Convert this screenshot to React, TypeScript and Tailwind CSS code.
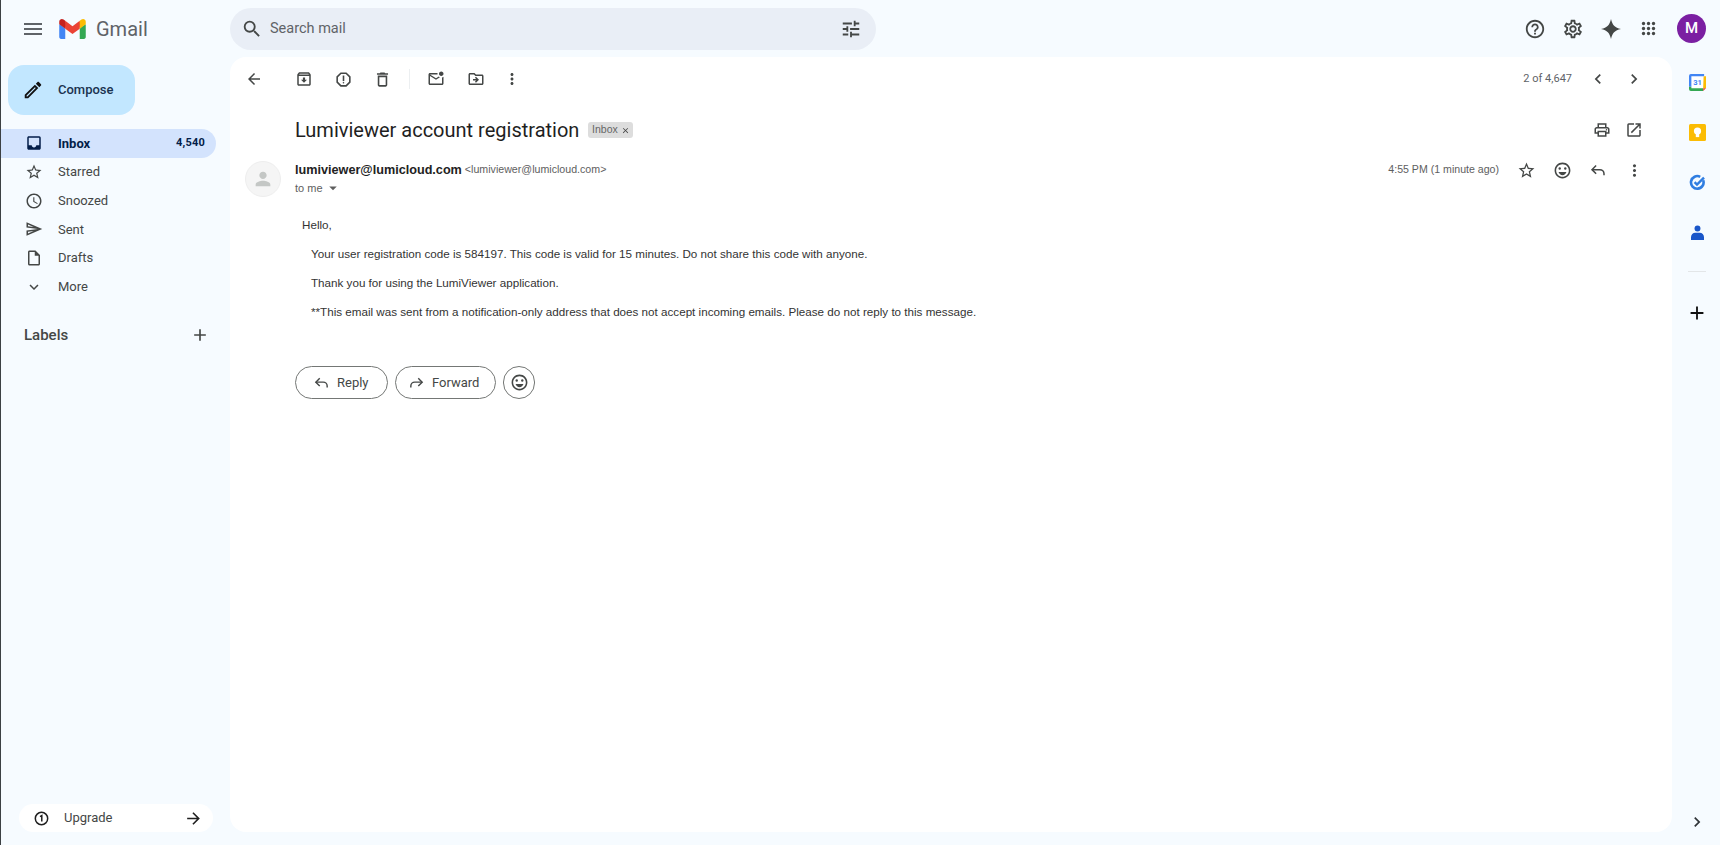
import type { ReactNode } from "react";
import {
  MdAdd,
  MdArrowBack,
  MdArrowDropDown,
  MdArrowForward,
  MdChevronLeft,
  MdChevronRight,
  MdClose,
  MdExpandMore,
  MdInbox,
  MdMenu,
  MdMoreVert,
  MdOpenInNew,
  MdOutlineAccessTime,
  MdOutlineArchive,
  MdOutlineDelete,
  MdOutlineDriveFileMove,
  MdOutlineEdit,
  MdOutlineEmojiEmotions,
  MdOutlineHelpOutline,
  MdOutlineInsertDriveFile,
  MdOutlineMarkEmailUnread,
  MdOutlinePrint,
  MdOutlineReport,
  MdOutlineSend,
  MdOutlineSettings,
  MdPerson,
  MdSearch,
  MdStarBorder,
  MdTune,
} from "react-icons/md";

const sans = "font-['Roboto',sans-serif]";
const arial = "font-['Liberation_Sans',Arial,sans-serif]";

function GmailLogo() {
  return (
    <svg viewBox="0 0 256 193" className="w-[27px] h-[20px]">
      <path fill="#4285F4" d="M58.182 192.05V93.14L27.507 65.077 0 49.504v125.091c0 9.658 7.825 17.455 17.455 17.455h40.727Z" />
      <path fill="#34A853" d="M197.818 192.05h40.727c9.659 0 17.455-7.826 17.455-17.455V49.505l-31.156 17.837-27.026 25.798v98.91Z" />
      <path fill="#EA4335" d="m58.182 93.14-4.174-38.647 4.174-36.989L128 69.868l69.818-52.364 4.669 34.992-4.669 40.644L128 145.504z" />
      <path fill="#FBBC04" d="M197.818 17.504V93.14L256 49.504V26.231c0-21.585-24.64-33.89-41.89-20.945l-16.292 12.218Z" />
      <path fill="#C5221F" d="m0 49.504 26.759 20.07L58.182 93.14V17.504L41.89 5.286C24.61-7.66 0 4.646 0 26.23v23.273Z" />
    </svg>
  );
}

// thin reply arrow, the react-icons one is too heavy
function ReplyIcon({ size, className }: { size: number; className?: string }) {
  return (
    <svg viewBox="0 0 24 24" width={size} height={size} className={className} fill="none" stroke="currentColor" strokeWidth="2">
      <path d="M9.500 6 4 11.500 9.500 17" />
      <path d="M4 11.500h10.500a5.500 5.500 0 0 1 5.500 5.500v2" />
    </svg>
  );
}

function AppsIcon() {
  const dots = [3, 9, 15];
  return (
    <svg viewBox="0 0 18 18" className="w-[15px] h-[15px]" fill="#444746">
      {dots.map((y) => dots.map((x) => <circle key={`${x}-${y}`} cx={x} cy={y} r="2" />))}
    </svg>
  );
}

function Box({ className, children }: { className: string; children: ReactNode }) {
  return <div className={`flex items-center justify-center shrink-0 ${className}`}>{children}</div>;
}

function NavRow({ icon, label, active, count }: { icon: ReactNode; label: string; active?: boolean; count?: string }) {
  return (
    <div
      className={`flex items-center h-[28.7px] w-[215px] rounded-r-full text-[13px] ${
        active ? "bg-[#d3e3fd] font-bold text-[#041e49]" : "text-[#444746]"
      }`}
    >
      <Box className="w-[57px] h-full pl-[8px]">{icon}</Box>
      <span>{label}</span>
      {count && <span className="ml-auto mr-[11px] text-[11px] tracking-[0.2px]">{count}</span>}
    </div>
  );
}

function Sidebar() {
  return (
    <aside className="w-[229px] shrink-0 flex flex-col">
      <div className="ml-[7px] mt-2 w-[127px] h-[50px] rounded-2xl bg-[#c2e7ff] flex items-center text-[#1a3350] text-[13px] font-medium">
        <Box className="w-[46px] h-full pl-[4px]">
          <MdOutlineEdit size={22} className="text-[#111]" />
        </Box>
        <span className="ml-[4px]">Compose</span>
      </div>
      <nav className="mt-[14px] flex flex-col">
        <NavRow active label="Inbox" count="4,540" icon={<MdInbox size={18} className="text-[#041e49]" />} />
        <NavRow label="Starred" icon={<MdStarBorder size={18} />} />
        <NavRow label="Snoozed" icon={<MdOutlineAccessTime size={18} />} />
        <NavRow label="Sent" icon={<MdOutlineSend size={18} />} />
        <NavRow label="Drafts" icon={<MdOutlineInsertDriveFile size={18} />} />
        <NavRow label="More" icon={<MdExpandMore size={18} />} />
      </nav>
      <div className="mt-[23px] flex items-center h-[22px] pl-[23px] pr-[20px] text-[15px] font-medium text-[#444746]">
        <span>Labels</span>
        <MdAdd size={20} className="ml-auto text-[#444746]" />
      </div>
      <div className="mt-auto mb-[13px] ml-[18px] w-[194px] h-[28px] rounded-full bg-white flex items-center text-[13px] text-[#444746]">
        <svg viewBox="0 0 16 16" className="w-[15px] h-[15px] ml-[15px]" fill="none" stroke="#1f1f1f" strokeWidth="1.6">
          <circle cx="8" cy="8" r="6.6" />
          <path d="M6.400 5.900 8.300 4.800v6.400" />
        </svg>
        <span className="ml-[15px]">Upgrade</span>
        <MdArrowForward size={19} className="ml-auto mr-[10.500px] text-[#1f1f1f]" />
      </div>
    </aside>
  );
}

function Toolbar() {
  const icon = "text-[#444746]";
  return (
    <div className="h-[44px] flex items-center pl-[4px] pr-[20px]">
      <Box className="w-[40px] h-[40px]">
        <MdArrowBack size={18} className={icon} />
      </Box>
      <Box className="w-[39px] h-[40px] ml-[10.5px]">
        <MdOutlineArchive size={18} className={icon} />
      </Box>
      <Box className="w-[39px] h-[40px]">
        <MdOutlineReport size={19} className={icon} />
      </Box>
      <Box className="w-[39px] h-[40px]">
        <MdOutlineDelete size={19} className={icon} />
      </Box>
      <div className="w-px h-[20px] bg-[#eceff1] ml-[7px]" />
      <Box className="w-[40px] h-[40px] ml-[6px]">
        <MdOutlineMarkEmailUnread size={18} className={icon} />
      </Box>
      <Box className="w-[40px] h-[40px]">
        <MdOutlineDriveFileMove size={18} className={icon} />
      </Box>
      <Box className="w-[32px] h-[40px]">
        <MdMoreVert size={18} className={icon} />
      </Box>
      <span className="ml-auto mr-[8px] text-[11px] text-[#5f6368]">2 of 4,647</span>
      <Box className="w-[36px] h-[40px]">
        <MdChevronLeft size={20} className={icon} />
      </Box>
      <Box className="w-[36px] h-[40px]">
        <MdChevronRight size={20} className={icon} />
      </Box>
    </div>
  );
}

function MessageHeader() {
  return (
    <div className="mt-[16px] flex pl-[15px] pr-[20px]">
      <Box className="w-[36px] h-[36px] rounded-full bg-[#f5f5f5] border border-[#eeeeee]">
        <MdPerson size={22} className="text-[#c4c7c5]" />
      </Box>
      <div className="ml-[14px] flex flex-col">
        <div className={`h-[18px] flex items-center ${arial}`}>
          <span className="text-[12.65px] font-bold text-[#222222]">lumiviewer@lumicloud.com</span>
          <span className="ml-[3px] text-[10.65px] text-[#5e5e5e]">&lt;lumiviewer@lumicloud.com&gt;</span>
        </div>
        <div className={`h-[18px] flex items-center text-[11px] text-[#5e5e5e] ${arial}`}>
          <span>to me</span>
          <MdArrowDropDown size={18} className="ml-[1px]" />
        </div>
      </div>
      <div className="ml-auto h-[18px] flex items-center text-[#444746]">
        <span className={`mr-[10px] text-[10.6px] text-[#5e5e5e] ${arial}`}>4:55 PM (1 minute ago)</span>
        <Box className="w-[36px] h-[18px] -translate-x-px">
          <MdStarBorder size={19} />
        </Box>
        <Box className="w-[35px] h-[18px]">
          <MdOutlineEmojiEmotions size={19} />
        </Box>
        <Box className="w-[36px] h-[18px]">
          <ReplyIcon size={18} />
        </Box>
        <Box className="w-[36px] h-[18px]">
          <MdMoreVert size={19} />
        </Box>
      </div>
    </div>
  );
}

function EmailBody() {
  return (
    <div className={`mt-[20px] pl-[72px] text-[11.65px] leading-[15px] text-[#333333] ${arial}`}>
      <p className="mb-[13.5px]">Hello,</p>
      <div className="pl-[9px] flex flex-col gap-[14.3px]">
        <p>Your user registration code is 584197. This code is valid for 15 minutes. Do not share this code with anyone.</p>
        <p>Thank you for using the LumiViewer application.</p>
        <p>**This email was sent from a notification-only address that does not accept incoming emails. Please do not reply to this message.</p>
      </div>
    </div>
  );
}

function ReplyButtons() {
  const pill = "h-[33px] rounded-full border border-[#747775] flex items-center text-[13px] text-[#444746]";
  return (
    <div className="mt-[47px] pl-[65px] flex gap-[7px]">
      <div className={`${pill} w-[93px]`}>
        <ReplyIcon size={17} className="ml-[17px]" />
        <span className="ml-[7px]">Reply</span>
      </div>
      <div className={`${pill} w-[101px]`}>
        <ReplyIcon size={17} className="ml-[12px] -scale-x-100" />
        <span className="ml-[7px]">Forward</span>
      </div>
      <Box className="w-[32px] h-[33px] rounded-full border border-[#747775] text-[#444746]">
        <MdOutlineEmojiEmotions size={19} />
      </Box>
    </div>
  );
}

function MailCard() {
  return (
    <main className="flex-1 min-w-0 bg-white rounded-2xl mb-[13px]">
      <Toolbar />
      <div className="mt-[14px] h-[30px] flex items-center pl-[65px] pr-[22px]">
        <h1 className="text-[20px] text-[#1f1f1f]">Lumiviewer account registration</h1>
        <span className={`ml-[9px] h-[16px] w-[45px] rounded-[3px] bg-[#dddddd] flex items-center justify-center text-[10.5px] text-[#666666] ${arial}`}>
          Inbox
          <MdClose size={9} className="ml-[3px] text-[#444]" />
        </span>
        <Box className="ml-auto w-[32px] h-[30px]">
          <MdOutlinePrint size={18} className="text-[#444746]" />
        </Box>
        <Box className="w-[32px] h-[30px]">
          <MdOpenInNew size={18} className="text-[#444746]" />
        </Box>
      </div>
      <MessageHeader />
      <EmailBody />
      <ReplyButtons />
    </main>
  );
}

function RightRail() {
  return (
    <aside className="w-[48px] shrink-0 flex flex-col items-center pl-[2px]">
      <Box className="h-[50px] w-full">
        <svg viewBox="0 0 18 18" className="w-[17px] h-[17px]">
          <path fill="#fff" d="M2.500 2.500h13v13h-13z" />
          <path fill="#4285F4" d="M2 0h14v2.500H2.500v11H0V2a2 2 0 0 1 2-2z" />
          <path fill="#34A853" d="M0 13.500v2.500a2 2 0 0 0 2 2h13v-3H2.500v-1.500z" />
          <path fill="#FBBC04" d="M15.500 2.500H18v12.500h-3z" />
          <path fill="#EA4335" d="M15 15h3l-3 3z" />
          <text x="9" y="12" textAnchor="middle" fontSize="8" fontWeight="700" fill="#4285F4" fontFamily="Roboto, sans-serif">31</text>
        </svg>
      </Box>
      <Box className="h-[50px] w-full">
        <svg viewBox="0 0 17 17" className="w-[17px] h-[17px]">
          <rect width="17" height="17" rx="1.500" fill="#FBBC04" />
          <circle cx="8.500" cy="7" r="3.600" fill="#fff" />
          <rect x="6.800" y="9.500" width="3.400" height="3.600" fill="#fff" />
        </svg>
      </Box>
      <Box className="h-[50px] w-full">
        <svg viewBox="0 0 17 17" className="w-[17px] h-[17px]" fill="none">
          <path d="M14.200 6.200a6.300 6.300 0 1 1-3-3.400" stroke="#2f7de1" strokeWidth="2.600" />
          <path d="M5.600 8.200 8 10.600l7-7" stroke="#2f7de1" strokeWidth="2.400" />
        </svg>
      </Box>
      <Box className="h-[50px] w-full">
        <svg viewBox="0 0 14 16" className="w-[13px] h-[15px]" fill="#1a56c9">
          <circle cx="7" cy="3.600" r="3.200" />
          <path d="M0 13a4.600 4.600 0 0 1 4.600-4.600h4.800A4.600 4.600 0 0 1 14 13v3H0z" />
        </svg>
      </Box>
      <div className="mt-[14px] w-[18px] h-px bg-[#e3e6e8]" />
      <Box className="mt-[29px] h-[24px] w-full">
        <MdAdd size={22} className="text-[#111]" />
      </Box>
      <Box className="mt-auto mb-[13px] h-[20px] w-full">
        <MdChevronRight size={20} className="text-[#303438]" />
      </Box>
    </aside>
  );
}

export default function App() {
  return (
    <div className={`h-screen overflow-hidden flex flex-col bg-[#f6fbff] border-l border-[#3c4043] ${sans}`}>
      <header className="h-[57px] shrink-0 flex items-start">
        <div className="w-[229px] h-[57px] flex items-center shrink-0">
          <Box className="ml-[20px] w-[24px] h-[24px]">
            <MdMenu size={24} className="text-[#5f6368]" />
          </Box>
          <div className="ml-[14px]">
            <GmailLogo />
          </div>
          <span className="ml-[10px] text-[20px] text-[#5f6368]">Gmail</span>
        </div>
        <div className="mt-2 w-[646px] h-[42px] rounded-full bg-[#e9eef6] flex items-center text-[#444746]">
          <MdSearch size={22} className="ml-[11px]" />
          <span className="ml-[7px] text-[14.5px] text-[#5f6368]">Search mail</span>
          <MdTune size={22} className="ml-auto mr-[14px]" />
        </div>
        <div className="ml-auto h-[57px] flex items-center text-[#444746]">
          <Box className="w-[38px] h-[38px]">
            <MdOutlineHelpOutline size={22} />
          </Box>
          <Box className="w-[38px] h-[38px]">
            <MdOutlineSettings size={22} />
          </Box>
          <Box className="w-[38px] h-[38px]">
            <svg viewBox="0 0 24 24" className="w-[20px] h-[20px]" fill="#444746">
              <path d="M12 0c1.500 7 4.500 10.500 12 12-7.500 1.500-10.500 5-12 12-1.500-7-4.500-10.500-12-12 7.500-1.500 10.500-5 12-12z" />
            </svg>
          </Box>
          <Box className="w-[36px] h-[38px]">
            <AppsIcon />
          </Box>
          <Box className="ml-[11px] mr-[14px] w-[29px] h-[29px] rounded-full bg-[#7b1fa2] text-white text-[15px] font-medium">M</Box>
        </div>
      </header>
      <div className="flex-1 min-h-0 flex">
        <Sidebar />
        <MailCard />
        <RightRail />
      </div>
    </div>
  );
}
